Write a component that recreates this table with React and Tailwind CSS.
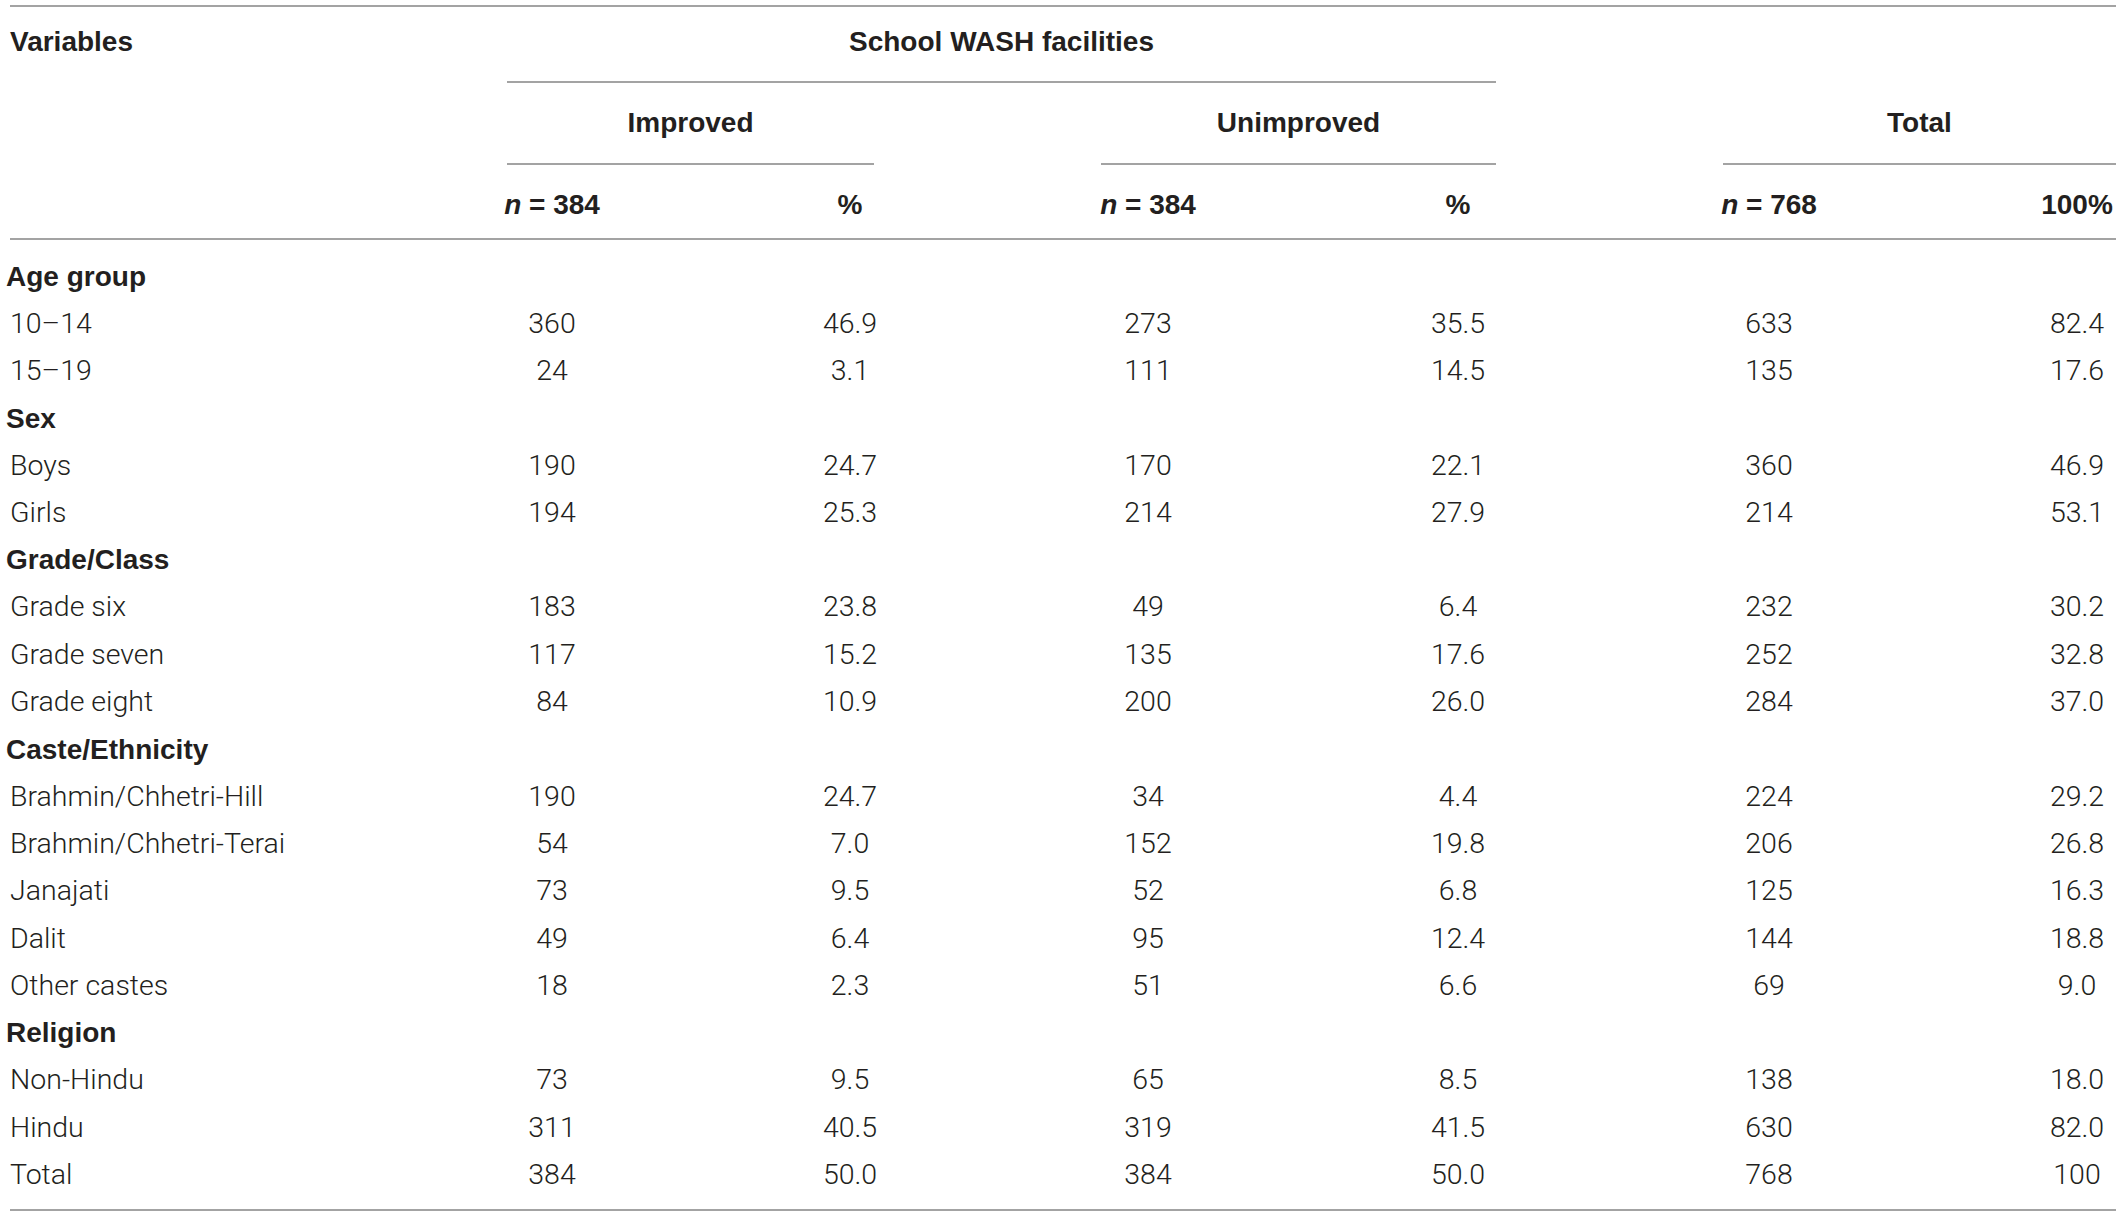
const GRID =
  'grid grid-cols-[497px_90px_229px_48px_227px_94px_225px_76px_227px_92px_223px_78px]';

// number cells sit in the even tracks, odd tracks are just spacing
const NUM_COLS = ['col-start-2', 'col-start-4', 'col-start-6', 'col-start-8', 'col-start-10', 'col-start-12'];

const ROWS = [
  { group: 'Age group' },
  { label: '10–14', values: ['360', '46.9', '273', '35.5', '633', '82.4'] },
  { label: '15–19', values: ['24', '3.1', '111', '14.5', '135', '17.6'] },
  { group: 'Sex' },
  { label: 'Boys', values: ['190', '24.7', '170', '22.1', '360', '46.9'] },
  { label: 'Girls', values: ['194', '25.3', '214', '27.9', '214', '53.1'] },
  { group: 'Grade/Class' },
  { label: 'Grade six', values: ['183', '23.8', '49', '6.4', '232', '30.2'] },
  { label: 'Grade seven', values: ['117', '15.2', '135', '17.6', '252', '32.8'] },
  { label: 'Grade eight', values: ['84', '10.9', '200', '26.0', '284', '37.0'] },
  { group: 'Caste/Ethnicity' },
  { label: 'Brahmin/Chhetri-Hill', values: ['190', '24.7', '34', '4.4', '224', '29.2'] },
  { label: 'Brahmin/Chhetri-Terai', values: ['54', '7.0', '152', '19.8', '206', '26.8'] },
  { label: 'Janajati', values: ['73', '9.5', '52', '6.8', '125', '16.3'] },
  { label: 'Dalit', values: ['49', '6.4', '95', '12.4', '144', '18.8'] },
  { label: 'Other castes', values: ['18', '2.3', '51', '6.6', '69', '9.0'] },
  { group: 'Religion' },
  { label: 'Non-Hindu', values: ['73', '9.5', '65', '8.5', '138', '18.0'] },
  { label: 'Hindu', values: ['311', '40.5', '319', '41.5', '630', '82.0'] },
  { label: 'Total', values: ['384', '50.0', '384', '50.0', '768', '100'] },
];

function NumCell({ col, children, className = '' }) {
  return <div className={`${col} flex justify-center whitespace-nowrap ${className}`}>{children}</div>;
}

function BodyRow({ row }) {
  if (row.group) {
    return (
      <div className={`${GRID} h-[47.3px] items-center`}>
        <div className="-ml-[4px] font-bold whitespace-nowrap">{row.group}</div>
      </div>
    );
  }
  return (
    <div className={`${GRID} h-[47.3px] items-center font-['Roboto','Liberation_Sans',sans-serif] text-[28.5px] font-light text-[#231f20]`}>
      <div className="whitespace-nowrap">{row.label}</div>
      {row.values.map((v, i) => (
        <NumCell key={i} col={NUM_COLS[i]}>
          {v}
        </NumCell>
      ))}
    </div>
  );
}

export default function App() {
  return (
    <div className="min-h-screen bg-white font-['Liberation_Sans',Arial,sans-serif] text-[28px] leading-none text-[#231f20]">
      <div className="ml-[10px] mt-[5px] w-[2106px] border-t-2 border-b-2 border-[#a3a3a3]">
        {/* header */}
        <div className={`${GRID} h-[76px] font-bold`}>
          <div className="flex items-center pb-[6px]">Variables</div>
          <div className="col-start-2 col-span-7 flex items-center justify-center border-b-2 border-[#a3a3a3] pb-[4px]">
            School WASH facilities
          </div>
        </div>
        <div className={`${GRID} h-[82px] font-bold`}>
          <div className="col-start-2 col-span-3 flex items-center justify-center border-b-2 border-[#a3a3a3]">
            Improved
          </div>
          <div className="col-start-6 col-span-3 flex items-center justify-center border-b-2 border-[#a3a3a3]">
            Unimproved
          </div>
          <div className="col-start-10 col-span-3 flex items-center justify-center border-b-2 border-[#a3a3a3]">
            Total
          </div>
        </div>
        <div className={`${GRID} h-[75px] items-center border-b-2 border-[#a3a3a3] pt-[7px] font-bold`}>
          <NumCell col="col-start-2">
            <i>n</i>&nbsp;= 384
          </NumCell>
          <NumCell col="col-start-4">%</NumCell>
          <NumCell col="col-start-6">
            <i>n</i>&nbsp;= 384
          </NumCell>
          <NumCell col="col-start-8">%</NumCell>
          <NumCell col="col-start-10">
            <i>n</i>&nbsp;= 768
          </NumCell>
          <NumCell col="col-start-12">100%</NumCell>
        </div>

        {/* body */}
        <div className="pt-[13px] pb-[10px]">
          {ROWS.map((row, i) => (
            <BodyRow key={i} row={row} />
          ))}
        </div>
      </div>
    </div>
  );
}
